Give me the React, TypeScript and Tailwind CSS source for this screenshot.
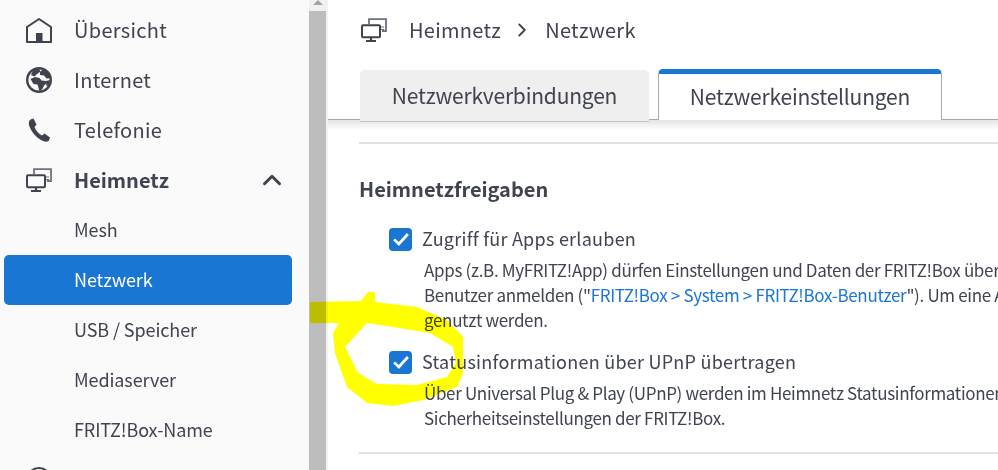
import { ChevronRight, ChevronUp } from "lucide-react";

const NetworkIcon = ({ className }: { className: string }) => (
  <svg viewBox="0 0 26 24" className={className} fill="none">
    <path d="M8 6V1.200h17V13h-4" stroke="#6f727c" strokeWidth="1.800" />
    <path d="M20 9h3M20 11.500h3" stroke="#6f727c" strokeWidth="1.200" />
    <rect x="1" y="7.200" width="18" height="12" rx="1" stroke="#3f434e" strokeWidth="2" />
    <path d="M10 19v3M5 23h10" stroke="#3f434e" strokeWidth="2.200" />
  </svg>
);

const HomeIcon = () => (
  <svg viewBox="0 0 26 25" className="w-[26px] h-[25px]" fill="none">
    <path d="M1 24V9L13 1l12 8v15z" stroke="#3f434e" strokeWidth="2" strokeLinejoin="round" />
    <rect x="10" y="15" width="6.500" height="9" fill="#3f434e" />
  </svg>
);

const GlobeIcon = () => (
  <svg viewBox="0 0 26 26" className="w-[26px] h-[26px]" fill="none">
    <circle cx="13" cy="13" r="11.800" stroke="#3f434e" strokeWidth="2.400" />
    <path
      d="M4.500 12l4.500-2 4.500 1 2 2.500 4.500.5 1.500 1.500-3.500 3-1.500 3.500-3 2.500-1-3.500-1-3.500-4-.5z"
      fill="#3f434e"
    />
    <path
      d="M7 3.500l6-2 1.500 3-3.500 2.500-2.500 2.500-3.500-1.500zM14 5l3.500-3 5.500 4 2 5-4.500.5-2.500-3-4-.5zM20 14l4-1-1 4.500-2.500 2z"
      fill="#3f434e"
    />
  </svg>
);

const PhoneIcon = () => (
  <svg viewBox="0 0 23 24" className="w-[23px] h-[24px]" fill="#3f434e">
    <path d="M2.500 1.500L5.500 .5 8.500 6.500 6.500 9C8 13 10.500 15.500 14 17.500l2.500-2 5.500 4-1 3c-1 1.500-3.500 1.500-6 .5C8.500 20 3 14 1 7c-.5-2.500 0-4.500 1.500-5.500z" />
  </svg>
);

const NavMain = ({ icon, label, bold }: { icon: React.ReactNode; label: string; bold?: boolean }) => (
  <div className="h-[50px] flex items-center text-[20px]">
    <div className="w-[26px] ml-[26px] mr-[22px] flex justify-center">{icon}</div>
    <span className={bold ? "font-bold" : "tracking-[0.3px]"}>{label}</span>
    {bold && <ChevronUp className="ml-auto mr-[22px] w-[30px] h-[30px]" strokeWidth={2.4} />}
  </div>
);

const NavSub = ({ label, active }: { label: string; active?: boolean }) => (
  <div
    className={
      "h-[50px] flex items-center pl-[70px] pb-[2px] text-[18px] tracking-[-0.1px] ml-[4px] mr-[17px] rounded-[5px] " +
      (active ? "bg-[#1976d2] text-white" : "")
    }
  >
    {label}
  </div>
);

const CheckBox = () => (
  <div className="w-[23px] h-[23px] rounded-[4px] bg-[#1976d2] flex items-center justify-center shrink-0">
    <svg viewBox="0 0 16 16" className="w-[20px] h-[20px]" fill="none">
      <path d="M2.500 8.300l3.800 3.700 7.200-8" stroke="white" strokeWidth="2.200" />
    </svg>
  </div>
);

const Desc = ({ children }: { children: React.ReactNode }) => (
  <p className="h-[25px] leading-[25px] text-[17px] tracking-[-0.33px] whitespace-nowrap">{children}</p>
);

export default function App() {
  return (
    <div className="relative w-[998px] h-[470px] overflow-hidden flex bg-white text-[#40444f] font-['Noto_Sans_CJK_SC',sans-serif]">
      <div className="w-[309px] shrink-0 bg-[#fafafa] pt-[5px]">
        <NavMain icon={<HomeIcon />} label="Übersicht" />
        <NavMain icon={<GlobeIcon />} label="Internet" />
        <NavMain icon={<PhoneIcon />} label="Telefonie" />
        <NavMain icon={<NetworkIcon className="w-[26px] h-[24px]" />} label="Heimnetz" bold />
        <NavSub label="Mesh" />
        <NavSub label="Netzwerk" active />
        <NavSub label="USB / Speicher" />
        <NavSub label="Mediaserver" />
        <NavSub label="FRITZ!Box-Name" />
        <div className="h-[50px] flex items-center pl-[26px]">
          <div className="w-[26px] h-[26px] rounded-full border-2 border-[#3f434e]" />
        </div>
      </div>

      <div className="w-[19px] shrink-0 bg-[#f1f1f1] flex flex-col">
        <div className="h-[11px] w-[17px] flex justify-center">
          <svg viewBox="0 0 10 5" className="w-[10px] h-[5px]">
            <path d="M5 0l5 5H0z" fill="#a3a3a3" />
          </svg>
        </div>
        <div className="flex-1 w-[17px] bg-[#bdbdbd]" />
      </div>

      <div className="flex-1 min-w-0">
        <div className="h-[60px] flex items-center pl-[33px] text-[20px] tracking-[0.3px]">
          <NetworkIcon className="w-[26px] h-[24px]" />
          <span className="ml-[22px]">Heimnetz</span>
          <ChevronRight className="ml-[10px] mr-[12px] w-[22px] h-[22px]" strokeWidth={2} />
          <span>Netzwerk</span>
        </div>
        <div className="h-[60px] pt-[10px] pl-[32px] flex items-end gap-[9px] border-b border-[#a8a8a8]">
          <div className="w-[289px] h-[52px] -mb-[3px] bg-[#efefef] rounded-t-[5px] border-b border-[#c4c4c4] flex items-center justify-center text-[21px] tracking-[-0.2px]">
            Netzwerkverbindungen
          </div>
          <div className="w-[284px] h-[51px] -mb-px bg-white border-x border-[#aaaaaa] border-t-[5px] border-t-[#1976d2] rounded-t-[5px] flex items-center justify-center text-[21px] tracking-[-0.2px]">
            Netzwerkeinstellungen
          </div>
        </div>
        <div className="h-[10px] bg-gradient-to-b from-[#e4e4e4] to-white" />
        <div className="pl-[31px]">
          <div className="mt-[12px] h-[2px] bg-[#e0e0e0]" />
          <h2 className="mt-[31px] h-[28px] leading-[28px] text-[20px] font-bold">Heimnetzfreigaben</h2>
          <div className="mt-[24px] ml-[30px] flex items-center gap-[10px] h-[24px]">
            <CheckBox />
            <span className="text-[18px] tracking-[0.25px] pb-[2px]">Zugriff für Apps erlauben</span>
          </div>
          <div className="ml-[65px] mt-[6px]">
            <Desc>Apps (z.B. MyFRITZ!App) dürfen Einstellungen und Daten der FRITZ!Box über</Desc>
            <Desc>
              Benutzer anmelden ("<span className="text-[#1976d2]">FRITZ!Box &gt; System &gt; FRITZ!Box-Benutzer</span>"). Um eine App
            </Desc>
            <Desc>genutzt werden.</Desc>
          </div>
          <div className="mt-[18px] ml-[30px] flex items-center gap-[10px] h-[24px]">
            <CheckBox />
            <span className="text-[18px] tracking-[0.25px] pb-[2px]">Statusinformationen über UPnP übertragen</span>
          </div>
          <div className="ml-[65px] mt-[6px]">
            <Desc>Über Universal Plug &amp; Play (UPnP) werden im Heimnetz Statusinformationen</Desc>
            <Desc>Sicherheitseinstellungen der FRITZ!Box.</Desc>
          </div>
          <div className="mt-[22px] h-[2px] bg-[#e0e0e0]" />
        </div>
      </div>

      {/* yellow marker scribble over the screenshot */}
      <svg viewBox="0 0 998 470" className="absolute inset-0 w-[998px] h-[470px] mix-blend-multiply pointer-events-none">
        <path
          fillRule="evenodd"
          fill="#ffff00"
          d="M310 302L361 301 368 292 375 292 375 302 417 307 447 320 463 337 463 373 457 387 423 400 393 406 367 403 347 387 335 353 333 333 339 323 310 323zM367 323L345 347 358 373 377 384 417 385 447 377 456 363 453 347 430 333 393 327z"
        />
      </svg>
    </div>
  );
}
